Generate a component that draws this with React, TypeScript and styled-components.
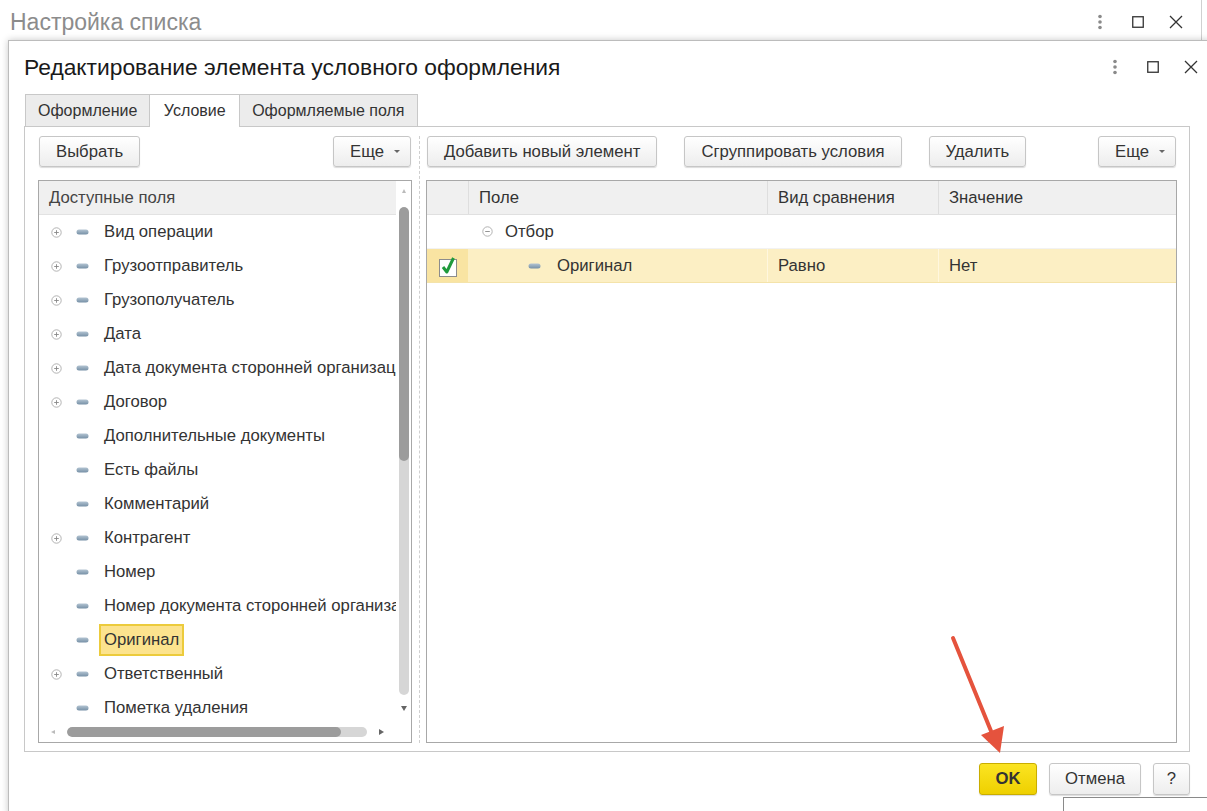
import * as React from 'react'
import styled, { createGlobalStyle } from 'styled-components'

const GlobalStyle = createGlobalStyle`
  html, body {
    margin: 0;
    padding: 0;
    background: #fff;
  }
  body {
    font-family: "Liberation Sans", Arial, sans-serif;
    color: #333;
  }
`

const FONT = '16.7px'

const Page = styled.div`
  position: relative;
  width: 1207px;
  height: 811px;
  overflow: hidden;
  background: #fff;
`

const OuterWindow = styled.div`
  width: 1201px;
  height: 100%;
  border-right: 1px solid #d0d0d0;
`

const OuterTitleBar = styled.div`
  height: 40px;
  box-sizing: border-box;
  display: flex;
  align-items: center;
  padding: 4px 6px 0 10px;
  font-size: 23px;
  color: #8c8c8c;
`

const TitleIcons = styled.div`
  margin-left: auto;
  display: flex;
  align-items: center;
`

const IconBtn = styled.div`
  width: 38px;
  height: 30px;
  display: flex;
  align-items: center;
  justify-content: center;
`

const Dialog = styled.div`
  position: absolute;
  left: 8px;
  top: 40px;
  right: -4px;
  bottom: -4px;
  border: 1px solid #bcbcbc;
  background: #fff;
  box-shadow: 0 0 7px rgba(0, 0, 0, 0.22);
  display: flex;
  flex-direction: column;
  padding: 0 20px 0 15px;
`

const DialogTitleBar = styled.div`
  height: 52px;
  flex: 0 0 52px;
  display: flex;
  align-items: center;
  margin-right: -20px;
  font-size: 22.8px;
  color: #1a1a1a;
`

const Tabs = styled.div`
  display: flex;
  align-items: flex-end;
  height: 33px;
  flex: 0 0 33px;
  padding-left: 1px;
`

const Tab = styled.div<{ $active?: boolean }>`
  position: relative;
  z-index: ${(p) => (p.$active ? 2 : 1)};
  height: ${(p) => (p.$active ? 33 : 32)}px;
  margin-bottom: ${(p) => (p.$active ? -1 : 0)}px;
  margin-right: -1px;
  padding: 0 ${(p) => (p.$active ? 13.5 : 12)}px;
  box-sizing: border-box;
  display: flex;
  align-items: center;
  border: 1px solid #c8c8c8;
  border-bottom: none;
  background: ${(p) => (p.$active ? '#fff' : '#ececec')};
  font-size: 16px;
  color: #333;
`

const Panel = styled.div`
  height: 626px;
  flex: 0 0 626px;
  box-sizing: border-box;
  border: 1px solid #c8c8c8;
  padding: 9px 12px 8px 13px;
  display: grid;
  grid-template-columns: 374px 14px 1fr;
  grid-template-rows: minmax(0, 1fr);
`

const Column = styled.div`
  display: flex;
  flex-direction: column;
  min-width: 0;
  min-height: 0;
`

const Separator = styled.div`
  justify-self: center;
  width: 0;
  border-left: 1px dashed #cfcfcf;
`

const Toolbar = styled.div<{ $gap?: number }>`
  height: 31px;
  flex: 0 0 31px;
  margin-bottom: 13px;
  display: flex;
  gap: ${(p) => p.$gap ?? 0}px;
  padding: 0 1px;
`

const Button = styled.div<{ $push?: boolean }>`
  height: 31px;
  box-sizing: border-box;
  padding: 0 16px;
  display: flex;
  align-items: center;
  gap: 10px;
  margin-left: ${(p) => (p.$push ? 'auto' : '0')};
  border: 1px solid #c6c6c6;
  border-radius: 3px;
  background: linear-gradient(#ffffff, #ededed);
  box-shadow: 0 1px 1px rgba(0, 0, 0, 0.14);
  font-size: ${FONT};
  color: #333;
  white-space: nowrap;
`

const Caret = styled.span`
  width: 0;
  height: 0;
  border-left: 3px solid transparent;
  border-right: 3px solid transparent;
  border-top: 3px solid #666;
  margin-right: -6px;
`

const TreeBox = styled.div`
  flex: 1;
  min-height: 0;
  border: 1px solid #a8a8a8;
  display: grid;
  grid-template-columns: minmax(0, 1fr) 15px;
  grid-template-rows: minmax(0, 1fr) 21px;
`

const TreeArea = styled.div`
  overflow: hidden;
  display: flex;
  flex-direction: column;
  min-height: 0;
`

const TreeHeader = styled.div`
  flex: 0 0 34px;
  box-sizing: border-box;
  display: flex;
  align-items: center;
  padding-left: 10px;
  background: #f0f0f0;
  border-bottom: 1px solid #e2e2e2;
  font-size: ${FONT};
  color: #444;
`

const TreeRow = styled.div`
  flex: 0 0 34px;
  box-sizing: border-box;
  display: flex;
  align-items: center;
  padding-left: 12px;
  white-space: nowrap;
  font-size: ${FONT};
  color: #333;
`

const ExpanderSlot = styled.div`
  width: 11px;
  height: 11px;
  display: flex;
  flex: 0 0 11px;
`

const Label = styled.span<{ $selected?: boolean }>`
  height: 32px;
  box-sizing: border-box;
  display: flex;
  align-items: center;
  padding: 0 3px;
  margin-left: 10px;
  border: 2px solid ${(p) => (p.$selected ? '#eccb3c' : 'transparent')};
  background: ${(p) => (p.$selected ? '#fce38e' : 'transparent')};
`

const VScroll = styled.div`
  display: flex;
  flex-direction: column;
  align-items: center;
  padding: 7px 0 9px;
  min-height: 0;
`

const ArrowUp = styled.div`
  width: 0;
  height: 0;
  border-left: 2.5px solid transparent;
  border-right: 2.5px solid transparent;
  border-bottom: 4px solid #bbb;
  margin: 1px 0;
`

const ArrowDown = styled.div`
  width: 0;
  height: 0;
  border-left: 3px solid transparent;
  border-right: 3px solid transparent;
  border-top: 5px solid #666;
  margin: 1px 0;
`

const VTrack = styled.div`
  flex: 1;
  width: 10px;
  margin: 13px 0 10px;
  border-radius: 5px;
  background: #d6d6d6;
  overflow: hidden;
`

const VThumb = styled.div`
  width: 100%;
  border-radius: 5px;
  background: #9c9c9c;
`

const HScroll = styled.div`
  display: flex;
  align-items: center;
  padding-left: 12px;
`

const ArrowLeft = styled.div`
  width: 0;
  height: 0;
  border-top: 2.5px solid transparent;
  border-bottom: 2.5px solid transparent;
  border-right: 4px solid #bbb;
`

const ArrowRight = styled.div`
  width: 0;
  height: 0;
  border-top: 3px solid transparent;
  border-bottom: 3px solid transparent;
  border-left: 5px solid #666;
  margin-left: 12px;
`

const HTrack = styled.div`
  width: 300px;
  height: 10px;
  margin-left: 12px;
  border-radius: 5px;
  background: #d6d6d6;
  overflow: hidden;
`

const HThumb = styled.div`
  height: 100%;
  border-radius: 5px;
  background: #9c9c9c;
`

const Table = styled.div`
  flex: 1;
  min-height: 0;
  border: 1px solid #a8a8a8;
  display: flex;
  flex-direction: column;
`

const TableRow = styled.div<{ $kind?: 'head' | 'body' | 'active' }>`
  flex: 0 0 34px;
  box-sizing: border-box;
  display: grid;
  grid-template-columns: 41px 299px 171px 1fr;
  background: ${(p) =>
    p.$kind === 'head' ? '#f0f0f0' : p.$kind === 'active' ? '#fcefc4' : '#fff'};
  border-bottom: 1px solid
    ${(p) => (p.$kind === 'head' ? '#e0e0e0' : p.$kind === 'active' ? '#f4e3aa' : '#f2f2f2')};
  font-size: ${FONT};
  color: #333;
`

const Cell = styled.div<{ $sep?: string; $pad?: number; $bg?: string }>`
  display: flex;
  align-items: center;
  padding-left: ${(p) => p.$pad ?? 10}px;
  border-left: ${(p) => (p.$sep ? `1px solid ${p.$sep}` : 'none')};
  background: ${(p) => p.$bg ?? 'transparent'};
  white-space: nowrap;
  gap: 12px;
`

const CheckCell = styled(Cell)`
  justify-content: center;
  padding-left: 0;
`

const Footer = styled.div`
  display: flex;
  justify-content: flex-end;
  gap: 12px;
  padding-top: 11px;
`

const FooterButton = styled.div<{ $w: number; $primary?: boolean }>`
  width: ${(p) => p.$w}px;
  height: 32px;
  box-sizing: border-box;
  display: flex;
  align-items: center;
  justify-content: center;
  border: 1px solid ${(p) => (p.$primary ? '#c9ad00' : '#c6c6c6')};
  border-radius: 3px;
  background: ${(p) =>
    p.$primary ? 'linear-gradient(#fbe422, #eed000)' : 'linear-gradient(#ffffff, #ededed)'};
  box-shadow: 0 1px 1px rgba(0, 0, 0, 0.14);
  font-size: ${FONT};
  font-weight: ${(p) => (p.$primary ? 700 : 400)};
  color: #333;
`

const BehindBox = styled.div`
  position: absolute;
  left: 1063px;
  top: 797px;
  width: 200px;
  height: 30px;
  background: #fff;
  border-top: 1px solid #8a8a8a;
  border-left: 1px solid #8a8a8a;
`

const Annotation = styled.svg`
  position: absolute;
  left: 0;
  top: 0;
  pointer-events: none;
`

const Dots = () => (
  <svg width="6" height="16" viewBox="0 0 6 16">
    <circle cx="3" cy="2.5" r="1.8" fill="#8a8a8a" />
    <circle cx="3" cy="8" r="1.8" fill="#8a8a8a" />
    <circle cx="3" cy="13.5" r="1.8" fill="#8a8a8a" />
  </svg>
)

const Square = () => (
  <svg width="12" height="12" viewBox="0 0 12 12">
    <rect x="0.75" y="0.75" width="10.5" height="10.5" fill="none" stroke="#333" strokeWidth="1.3" />
  </svg>
)

const Cross = () => (
  <svg width="14" height="14" viewBox="0 0 14 14">
    <path d="M1 1L13 13M13 1L1 13" stroke="#333" strokeWidth="1.3" />
  </svg>
)

const PlusCircle = ({ minus }: { minus?: boolean }) => (
  <svg width="11" height="11" viewBox="0 0 11 11">
    <circle cx="5.5" cy="5.5" r="4.7" fill="#fff" stroke="#aaa" strokeWidth="0.9" />
    <path d={minus ? 'M3.2 5.5H7.8' : 'M3.2 5.5H7.8M5.5 3.2V7.8'} stroke="#888" strokeWidth="0.9" />
  </svg>
)

const FieldIcon = ({ ml }: { ml: number }) => (
  <svg width="13" height="6" viewBox="0 0 13 6" style={{ marginLeft: ml, flex: '0 0 13px' }}>
    <defs>
      <linearGradient id="fg" x1="0" y1="0" x2="0" y2="1">
        <stop offset="0" stopColor="#b3c4d2" />
        <stop offset="1" stopColor="#7690a6" />
      </linearGradient>
    </defs>
    <rect x="0.5" y="0.5" width="12" height="5" rx="2.5" fill="url(#fg)" />
  </svg>
)

const CheckBox = () => (
  <svg width="22" height="24" viewBox="0 0 22 24">
    <rect x="2.5" y="5.5" width="17" height="17" fill="#fff" stroke="#8c8c8c" />
    <path d="M6 13L9.8 18L16.5 4" fill="none" stroke="#1f9a3c" strokeWidth="3" strokeLinejoin="round" />
  </svg>
)

type Field = { name: string; expandable?: boolean; selected?: boolean }

const fields: Field[] = [
  { name: 'Вид операции', expandable: true },
  { name: 'Грузоотправитель', expandable: true },
  { name: 'Грузополучатель', expandable: true },
  { name: 'Дата', expandable: true },
  { name: 'Дата документа сторонней организации', expandable: true },
  { name: 'Договор', expandable: true },
  { name: 'Дополнительные документы' },
  { name: 'Есть файлы' },
  { name: 'Комментарий' },
  { name: 'Контрагент', expandable: true },
  { name: 'Номер' },
  { name: 'Номер документа сторонней организации' },
  { name: 'Оригинал', selected: true },
  { name: 'Ответственный', expandable: true },
  { name: 'Пометка удаления' },
]

export default function App() {
  return (
    <>
      <GlobalStyle />
      <Page>
        <OuterWindow>
          <OuterTitleBar>
            Настройка списка
            <TitleIcons>
              <IconBtn><Dots /></IconBtn>
              <IconBtn><Square /></IconBtn>
              <IconBtn><Cross /></IconBtn>
            </TitleIcons>
          </OuterTitleBar>
        </OuterWindow>

        <Dialog>
          <DialogTitleBar>
            Редактирование элемента условного оформления
            <TitleIcons>
              <IconBtn><Dots /></IconBtn>
              <IconBtn><Square /></IconBtn>
              <IconBtn><Cross /></IconBtn>
            </TitleIcons>
          </DialogTitleBar>

          <Tabs>
            <Tab>Оформление</Tab>
            <Tab $active>Условие</Tab>
            <Tab>Оформляемые поля</Tab>
          </Tabs>

          <Panel>
            <Column>
              <Toolbar>
                <Button>Выбрать</Button>
                <Button $push>Еще <Caret /></Button>
              </Toolbar>
              <TreeBox>
                <TreeArea>
                  <TreeHeader>Доступные поля</TreeHeader>
                  {fields.map((f) => (
                    <TreeRow key={f.name}>
                      <ExpanderSlot>{f.expandable && <PlusCircle />}</ExpanderSlot>
                      <FieldIcon ml={14} />
                      <Label $selected={f.selected}>{f.name}</Label>
                    </TreeRow>
                  ))}
                </TreeArea>
                <VScroll>
                  <ArrowUp />
                  <VTrack>
                    <VThumb style={{ height: 254 }} />
                  </VTrack>
                  <ArrowDown />
                </VScroll>
                <HScroll>
                  <ArrowLeft />
                  <HTrack>
                    <HThumb style={{ width: 274 }} />
                  </HTrack>
                  <ArrowRight />
                </HScroll>
              </TreeBox>
            </Column>

            <Separator />

            <Column>
              <Toolbar $gap={27}>
                <Button>Добавить новый элемент</Button>
                <Button>Сгруппировать условия</Button>
                <Button>Удалить</Button>
                <Button $push>Еще <Caret /></Button>
              </Toolbar>
              <Table>
                <TableRow $kind="head">
                  <Cell />
                  <Cell $sep="#dedede">Поле</Cell>
                  <Cell $sep="#dedede">Вид сравнения</Cell>
                  <Cell $sep="#dedede">Значение</Cell>
                </TableRow>
                <TableRow $kind="body">
                  <Cell />
                  <Cell $pad={14}>
                    <PlusCircle minus />
                    Отбор
                  </Cell>
                  <Cell />
                  <Cell />
                </TableRow>
                <TableRow $kind="active">
                  <CheckCell $bg="#f9e4a2">
                    <CheckBox />
                  </CheckCell>
                  <Cell $pad={0} style={{ gap: 16 }}>
                    <FieldIcon ml={60} />
                    Оригинал
                  </Cell>
                  <Cell $sep="#fff7de">Равно</Cell>
                  <Cell $sep="#fff7de">Нет</Cell>
                </TableRow>
              </Table>
            </Column>
          </Panel>

          <Footer>
            <FooterButton $w={58} $primary>OK</FooterButton>
            <FooterButton $w={92}>Отмена</FooterButton>
            <FooterButton $w={37}>?</FooterButton>
          </Footer>
        </Dialog>

        <BehindBox />

        <Annotation width="1207" height="811" viewBox="0 0 1207 811">
          <path d="M953 638L991 731" stroke="#e5533d" strokeWidth="4" strokeLinecap="round" />
          <polygon points="1000,753 981,735 1004,726" fill="#e5533d" />
        </Annotation>
      </Page>
    </>
  )
}
